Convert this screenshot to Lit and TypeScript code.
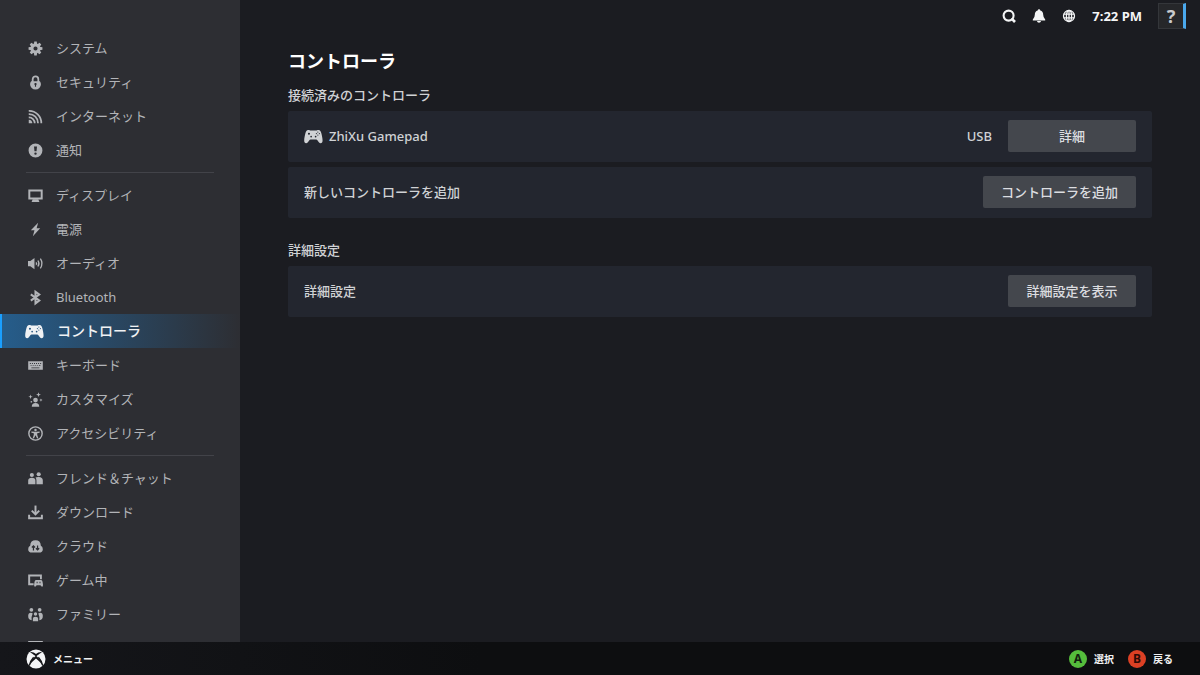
import { LitElement, html, svg, css, TemplateResult } from "lit";
import { customElement, property, state } from "lit/decorators.js";
import { classMap } from "lit/directives/class-map.js";

type Glyph = { box: string; body: TemplateResult };

const pad = svg`
  <path fill="currentColor" fill-rule="evenodd" d="M4.6 1C5.8 1 6.3 1.7 7.2 1.7H12.8C13.7 1.7 14.2 1 15.4 1C17.3 1 18 2.4 18.5 4.6C19.1 7.2 19.8 10 19.8 12.2C19.8 14.1 19 15.2 17.8 15.2C16.3 15.2 15.3 13.6 14.3 12C14 11.4 13.6 11.2 13 11.2H7C6.4 11.2 6 11.4 5.7 12C4.7 13.6 3.7 15.2 2.2 15.2C1 15.2 .2 14.1 .2 12.2C.2 10 .9 7.2 1.5 4.6C2 2.4 2.7 1 4.6 1ZM5.3 4A1.1 1.1 0 1 0 5.3 6.2A1.1 1.1 0 1 0 5.3 4ZM7.6 7.2A.9 .9 0 1 0 7.6 9A.9 .9 0 1 0 7.6 7.2ZM12.4 7.2A.9 .9 0 1 0 12.4 9A.9 .9 0 1 0 12.4 7.2ZM14.8 2.7A.6.6 0 1 0 14.8 3.9A.6.6 0 1 0 14.8 2.7ZM14.8 5.9A.6.6 0 1 0 14.8 7.1A.6.6 0 1 0 14.8 5.9ZM13.2 4.3A.6.6 0 1 0 13.2 5.5A.6.6 0 1 0 13.2 4.3ZM16.4 4.3A.6.6 0 1 0 16.4 5.5A.6.6 0 1 0 16.4 4.3Z"/>`;

const glyphs: Record<string, Glyph> = {
  gear: {
    box: "0 0 16 16",
    body: svg`<g fill="currentColor">
      <path fill-rule="evenodd" d="M8 2.6A5.4 5.4 0 1 0 8 13.4A5.4 5.4 0 1 0 8 2.6ZM8 5.8A2.2 2.2 0 1 1 8 10.2A2.2 2.2 0 1 1 8 5.8Z"/>
      ${[0, 45, 90, 135, 180, 225, 270, 315].map(
        (a) => svg`<path transform="rotate(${a} 8 8)" d="M6.7 .6H9.3L9.8 3.8H6.2Z"/>`
      )}</g>`,
  },
  lock: {
    box: "0 0 16 16",
    body: svg`<path d="M5 8V4.4A3 3 0 0 1 11 4.4V8" fill="none" stroke="currentColor" stroke-width="1.9"/>
      <path fill="currentColor" fill-rule="evenodd" d="M3.3 6.6H12.7Q13.8 8.1 13.8 9.9A5.8 5.6 0 0 1 2.2 9.9Q2.2 8.1 3.3 6.6ZM8 8.5A1.1 1.1 0 0 0 7.4 10.6V12.4H8.6V10.6A1.1 1.1 0 0 0 8 8.5Z"/>`,
  },
  signal: {
    box: "0 0 16 16",
    body: svg`<g fill="none" stroke="currentColor" stroke-width="1.9">
      <path d="M.8 1.9A13 13 0 0 1 14.2 15.2"/><path d="M.8 5.4A9.6 9.6 0 0 1 10.7 15.2"/><path d="M.8 8.9A6.2 6.2 0 0 1 7.2 15.2"/></g>
      <path fill="currentColor" d="M.8 11.4A3.6 3.6 0 0 1 4.6 15.2H.8Z"/>`,
  },
  alert: {
    box: "0 0 16 16",
    body: svg`<path fill="currentColor" fill-rule="evenodd" d="M8 .6A7.4 7.4 0 1 0 8 15.4A7.4 7.4 0 1 0 8 .6ZM6.4 3.6H9.6L9.1 8.9H6.9ZM8 10A1.3 1.3 0 1 1 8 12.6A1.3 1.3 0 1 1 8 10Z"/>`,
  },
  display: {
    box: "0 0 16 16",
    body: svg`<path d="M1.4 2.6H14.6V11.2H1.4Z" fill="none" stroke="currentColor" stroke-width="2.1"/><path fill="currentColor" d="M5 12H11L12.2 15H3.8Z"/>`,
  },
  bolt: {
    box: "0 0 16 16",
    body: svg`<path fill="currentColor" d="M10.8 .8L3 8.9H6.9L5.2 15.2L13 6.6H9.2Z"/>`,
  },
  audio: {
    box: "0 0 16 16",
    body: svg`<path fill="currentColor" d="M0 5.2H2.5L6.9 2V14L2.5 10.8H0Z"/>
      <path fill="currentColor" d="M8.3 6A2.1 2.1 0 0 1 8.3 10Z"/>
      <g fill="none" stroke="currentColor" stroke-width="1.4"><path d="M10.6 4.8Q12.8 8 10.6 11.2"/><path d="M13.2 2.9Q16.6 8 13.2 13.1"/></g>`,
  },
  bluetooth: {
    box: "0 0 16 16",
    body: svg`<path d="M3 4.6L12 11.2L8 14.2V1.8L12 4.8L3 11.4" fill="none" stroke="currentColor" stroke-width="2.2"/>`,
  },
  pad: { box: "0 0 20 16", body: pad },
  keyboard: {
    box: "0 0 16 16",
    body: svg`<path fill="currentColor" fill-rule="evenodd" d="M.2 3.4H15.8V12.6H.2ZM2 5.4V6.3H3V5.4ZM4.2 5.4V6.3H5.2V5.4ZM6.4 5.4V6.3H7.4V5.4ZM8.6 5.4V6.3H9.6V5.4ZM10.8 5.4V6.3H11.8V5.4ZM13 5.4V6.3H14V5.4ZM2.8 7.6V8.5H3.8V7.6ZM5 7.6V8.5H6V7.6ZM7.2 7.6V8.5H8.2V7.6ZM9.4 7.6V8.5H10.4V7.6ZM11.6 7.6V8.5H13.2V7.6ZM3.6 10V10.9H12.2V10Z"/>`,
  },
  customize: {
    box: "0 0 16 16",
    body: svg`<g fill="currentColor"><circle cx="8" cy="8.6" r="2.5"/><path d="M4 15.6Q4 11.8 8 11.8Q12 11.8 12 15.6Z"/>
      <path d="M11.2 .2L11.9 2.1L13.8 2.8L11.9 3.5L11.2 5.4L10.5 3.5L8.6 2.8L10.5 2.1Z"/>
      <path d="M2.7 2.7L3.3 4.5L5.1 5.1L3.3 5.7L2.7 7.5L2.1 5.7L.3 5.1L2.1 4.5Z"/>
      <path d="M13.8 6.9L14.3 8.1L15.5 8.6L14.3 9.1L13.8 10.3L13.3 9.1L12.1 8.6L13.3 8.1Z"/><circle cx="3.6" cy="10.4" r=".9"/></g>`,
  },
  access: {
    box: "0 0 16 16",
    body: svg`<circle cx="8" cy="8" r="7.1" fill="none" stroke="currentColor" stroke-width="1.5"/>
      <circle cx="8" cy="4.2" r="1.3" fill="currentColor"/>
      <path fill="currentColor" d="M3.6 5.8L7 6.1H9L12.4 5.8V7.2L9.8 7.6V9.2L11 13L9.7 13.4L8.2 10.2H7.8L6.3 13.4L5 13L6.2 9.2V7.6L3.6 7.2Z"/>`,
  },
  friends: {
    box: "0 0 16 16",
    body: svg`<g fill="currentColor"><circle cx="4.1" cy="4.3" r="2.2"/><circle cx="11.4" cy="3.5" r="2.2"/>
      <path d="M.2 14.2V10.3Q.2 7.3 4.2 7.3Q7.9 7.3 7.9 10.3V14.2Z"/>
      <path d="M8 6.9Q9.3 6.2 11.4 6.3Q15.8 6.5 15.8 10V14.2H9V10.2Q9 8 8 6.9Z"/></g>`,
  },
  download: {
    box: "0 0 16 16",
    body: svg`<g fill="none" stroke="currentColor" stroke-width="2.1"><path d="M8 .6V9.6"/><path d="M4 6L8 10L12 6"/><path d="M1.2 10.4V14.1H14.8V10.4"/></g>`,
  },
  cloud: {
    box: "0 0 16 16",
    body: svg`<path fill="currentColor" d="M4.4 14.4Q.2 14.4 .2 10.8Q.2 8.2 2.3 7.2Q2.6 1.4 8 1.4Q13.4 1.4 13.7 7.2Q15.8 8.2 15.8 10.8Q15.8 14.4 11.6 14.4Z"/>
      <g fill="none" class="cut" stroke-width="1.3"><path d="M5.8 12.2V7.4M4.1 9.1L5.8 7.3L7.5 9.1"/><path d="M10.2 6.8V11.6M8.5 9.9L10.2 11.7L11.9 9.9"/></g>`,
  },
  ingame: {
    box: "0 0 16 16",
    body: svg`<path fill="currentColor" d="M.2 1.6H14.8V6.6H12.8V3.7H2.3V11H6V13H.2Z"/>
      <path fill="currentColor" fill-rule="evenodd" d="M8.5 7.5H14Q15.2 7.5 15.5 9.3L16 12.4Q16.1 14.6 15 14.6Q14.1 14.6 13.3 13.1H9.2Q8.4 14.6 7.5 14.6Q6.4 14.6 6.5 12.4L7 9.3Q7.3 7.5 8.5 7.5ZM9.2 9.4V10.8H10.2V9.4ZM12.3 9.4V10.8H13.3V9.4Z"/>`,
  },
  family: {
    box: "0 0 16 16",
    body: svg`<g fill="currentColor"><circle cx="3.6" cy="3" r="2"/><circle cx="12.4" cy="3" r="2"/><circle cx="8" cy="7.4" r="1.8"/>
      <path d="M3.9 14Q.1 14 .2 9.4Q.3 6 3 6Q4.4 6 5 7Q3.4 10.3 3.9 14Z"/>
      <path d="M12.1 14Q15.9 14 15.8 9.4Q15.7 6 13 6Q11.6 6 11 7Q12.6 10.3 12.1 14Z"/>
      <path d="M5.2 15.2V12.8Q5.2 10.3 8 10.3Q10.8 10.3 10.8 12.8V15.2Z"/></g>`,
  },
  remote: {
    box: "0 0 16 16",
    body: svg`<path d="M1.2 1H14.8V12H1.2Z" fill="none" stroke="currentColor" stroke-width="2"/>`,
  },
  search: {
    box: "1 1 14 14",
    body: svg`<circle cx="7.6" cy="7.6" r="5" fill="none" stroke="currentColor" stroke-width="2.1"/><path d="M10.4 10.4L14 14" stroke="currentColor" stroke-width="2.7"/>`,
  },
  bell: {
    box: "1 1 14 14",
    body: svg`<path fill="currentColor" d="M8 1.2Q9.2 1.2 9.3 2.4Q12.2 3.3 12.2 6.8Q12.2 9.8 14.2 11.4V12.4H1.8V11.4Q3.8 9.8 3.8 6.8Q3.8 3.3 6.7 2.4Q6.8 1.2 8 1.2ZM5.9 13.1H10.1Q9.7 14.8 8 14.8Q6.3 14.8 5.9 13.1Z"/>`,
  },
  globe: {
    box: "1 1 14 14",
    body: svg`<g fill="none" stroke="currentColor" stroke-width="1.3"><circle cx="8" cy="8" r="5.5"/><ellipse cx="8" cy="8" rx="2.6" ry="5.5"/><path d="M8 2.5V13.5M2.8 6.1H13.2M2.8 9.9H13.2"/></g>`,
  },
  xbox: {
    box: "0 0 20 20",
    body: svg`<circle cx="10" cy="10" r="9.5" fill="#f4f5f6"/>
      <path fill="#141518" d="M10 6.8C13.2 9.4 16.6 13.8 16.6 16.8C15.5 14.6 12.6 11.3 10 9.4C7.4 11.3 4.5 14.6 3.4 16.8C3.4 13.8 6.8 9.4 10 6.8Z"/>
      <path fill="#141518" d="M4.2 3.2C6 2.8 8.6 4 10 5C11.4 4 14 2.8 15.8 3.2C14.6 3.9 12.6 5.2 11.2 6.6L10 7.6L8.8 6.6C7.4 5.2 5.4 3.9 4.2 3.2Z"/>
      <path fill="none" stroke="#141518" stroke-width="1.3" d="M7.6 8.2Q4 12.2 3.3 16.6M12.4 8.2Q16 12.2 16.7 16.6"/>`,
  },
};

@customElement("ui-glyph")
export class UiGlyph extends LitElement {
  @property() name = "gear";
  static styles = css`
    :host { display: inline-flex; width: 15px; height: 15px; flex: none; justify-content: center; }
    svg { height: 100%; display: block; overflow: visible; }
    .cut { stroke: #2d2e33; }
  `;
  render() {
    const g = glyphs[this.name];
    return html`<svg viewBox=${g.box} aria-hidden="true">${g.body}</svg>`;
  }
}

type Entry = { icon: string; label: string; iconOnly?: boolean };

const groups: Entry[][] = [
  [
    { icon: "gear", label: "システム" },
    { icon: "lock", label: "セキュリティ" },
    { icon: "signal", label: "インターネット" },
    { icon: "alert", label: "通知" },
  ],
  [
    { icon: "display", label: "ディスプレイ" },
    { icon: "bolt", label: "電源" },
    { icon: "audio", label: "オーディオ" },
    { icon: "bluetooth", label: "Bluetooth" },
    { icon: "pad", label: "コントローラ" },
    { icon: "keyboard", label: "キーボード" },
    { icon: "customize", label: "カスタマイズ" },
    { icon: "access", label: "アクセシビリティ" },
  ],
  [
    { icon: "friends", label: "フレンド＆チャット" },
    { icon: "download", label: "ダウンロード" },
    { icon: "cloud", label: "クラウド" },
    { icon: "ingame", label: "ゲーム中" },
    { icon: "family", label: "ファミリー" },
    { icon: "remote", label: "リモートプレイ", iconOnly: true },
  ],
];

@customElement("app-root")
export class AppRoot extends LitElement {
  @state() private current = "コントローラ";

  static styles = css`
    :host {
      display: grid;
      grid-template-columns: 240px minmax(0, 1fr);
      grid-template-rows: minmax(0, 1fr) auto;
      height: 100vh;
      background: #1b1c21;
      color: #d0d2d5;
      font: 500 13px/20px "Noto Sans", "Noto Sans CJK JP", sans-serif;
    }
    * { box-sizing: border-box; }
    button { font: inherit; color: inherit; border: 0; padding: 0; background: none; cursor: pointer; }
    .side { background: #2d2e33; padding-top: 31px; overflow: hidden; }
    .group { list-style: none; margin: 0; padding: 0; }
    .group + .group::before { content: ""; display: block; height: 1px; margin: 5px 26px; background: #424349; }
    .link {
      display: flex; align-items: center; gap: 13px;
      height: 34px; padding-left: 28px;
      color: #b2b4b8; text-decoration: none; font-weight: 400;
    }
    .link.on {
      padding-left: 25px;
      background: linear-gradient(90deg, #1a9fff 2px, #265d8b 2px, #2d2e33 100%);
      color: #f0f2f4; font-size: 14px; font-weight: 500;
    }
    .link.on .icon { width: 19px; }
    .main { display: flex; flex-direction: column; min-width: 0; }
    .status {
      display: flex; align-items: center; justify-content: flex-end;
      gap: 16px; padding: 0 14px 0 0; height: 32px;
      color: #f4f5f6; font-weight: 700;
    }
    .tool { display: flex; }
    .tool .icon { width: 14px; height: 14px; }
    .help {
      width: 28px; height: 26px; background: #26272a;
      border: 1px solid #34363a; border-right: 3px solid #4aa8ec;
      color: #c9cbce; font-size: 18px; line-height: 24px; font-weight: 700;
    }
    .content { padding: 16px 48px; }
    h1 { margin: 0; font-size: 18px; line-height: 26px; color: #fff; }
    h2 { margin: 11px 0 6px; font-size: 13px; line-height: 20px; font-weight: 500; }
    section + section h2 { margin-top: 22px; }
    .card {
      display: flex; align-items: center; gap: 16px;
      padding: 9px 16px 10px; border-radius: 2px; background: #23262f;
    }
    .card + .card { margin-top: 5px; }
    .name { flex: 1; display: flex; align-items: center; gap: 6px; }
    .name .icon { width: 19px; }
    .action {
      min-width: 128px; height: 32px; padding: 0 18px;
      border-radius: 2px; background: #44474d; color: #dcdde0;
    }
    .foot {
      grid-column: 1 / -1; display: flex; align-items: center; gap: 14px;
      height: 33px; padding: 0 27px 0 26px;
      background: linear-gradient(90deg, #15161a, #0d0e10 40%);
      color: #f0f1f2; font-size: 10px; font-weight: 700; z-index: 1;
    }
    .hint { display: flex; align-items: center; gap: 7px; font-weight: 700; }
    .hint.menu { margin-right: auto; }
    .hint.menu .icon { width: 20px; height: 20px; }
    .key {
      width: 18px; height: 18px; border-radius: 50%;
      text-align: center; font-size: 12px; line-height: 18px; color: #12200e;
    }
    .a { background: #55bd3c; }
    .b { background: #dc4024; color: #2c0a04; }
  `;

  render() {
    return html`
      <nav class="side" aria-label="設定">
        ${groups.map(
          (g) => html`<ul class="group">
            ${g.map(
              (e) => html`<li>
                <a href="#" class=${classMap({ link: true, on: e.label === this.current })}
                  aria-label=${e.label} @click=${() => (this.current = e.label)}>
                  <ui-glyph class="icon" name=${e.icon}></ui-glyph>${e.iconOnly ? "" : html`<span>${e.label}</span>`}
                </a>
              </li>`
            )}
          </ul>`
        )}
      </nav>
      <div class="main">
        <header class="status">
          <button class="tool" aria-label="検索"><ui-glyph class="icon" name="search"></ui-glyph></button>
          <button class="tool" aria-label="通知"><ui-glyph class="icon" name="bell"></ui-glyph></button>
          <button class="tool" aria-label="ネットワーク"><ui-glyph class="icon" name="globe"></ui-glyph></button>
          <time>7:22 PM</time>
          <button class="help">?</button>
        </header>
        <main class="content">
          <h1>コントローラ</h1>
          <section>
            <h2>接続済みのコントローラ</h2>
            <div class="card">
              <span class="name"><ui-glyph class="icon" name="pad"></ui-glyph>ZhiXu Gamepad</span>
              <span>USB</span>
              <button class="action">詳細</button>
            </div>
            <div class="card">
              <span class="name">新しいコントローラを追加</span>
              <button class="action">コントローラを追加</button>
            </div>
          </section>
          <section>
            <h2>詳細設定</h2>
            <div class="card">
              <span class="name">詳細設定</span>
              <button class="action">詳細設定を表示</button>
            </div>
          </section>
        </main>
      </div>
      <footer class="foot">
        <button class="hint menu"><ui-glyph class="icon" name="xbox"></ui-glyph>メニュー</button>
        <button class="hint"><span class="key a">A</span>選択</button>
        <button class="hint"><span class="key b">B</span>戻る</button>
      </footer>
    `;
  }
}
